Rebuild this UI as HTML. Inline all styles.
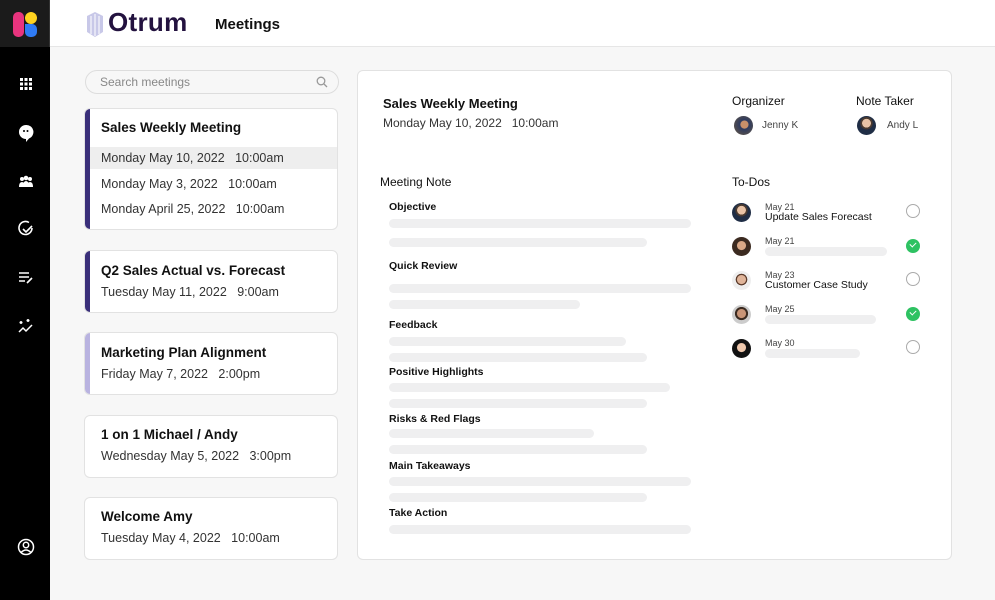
<!DOCTYPE html>
<html><head><meta charset="utf-8"><style>
*{margin:0;padding:0;box-sizing:border-box}
body{width:995px;height:600px;overflow:hidden;background:#f7f7f7;font-family:"Liberation Sans",sans-serif;position:relative;color:#111}
.a{position:absolute}
.side{left:0;top:0;width:50px;height:600px;background:#000}
.logo{left:0;top:0;width:50px;height:47px;background:#1b1b1b;border-right:1px solid #333}
.hdr{left:50px;top:0;width:945px;height:47px;background:#fff;border-bottom:1px solid #e6e6e6}
.card{background:#fff;border:1px solid #e2e2e2;border-radius:6px;overflow:hidden;left:84px;width:254px}
.card .bar{position:absolute;left:0;top:0;bottom:0;width:5px}
.t{font-weight:bold;font-size:13.5px;position:absolute;left:16px}
.d{font-size:12.5px;color:#333;position:absolute;left:16px;white-space:pre}
.sk{position:absolute;height:9px;border-radius:5px;background:#efeff0}
.lb{position:absolute;left:389px;font-size:10.5px;font-weight:bold}
.av{position:absolute;width:19px;height:19px;border-radius:50%;background:radial-gradient(circle at 50% 38%,#e9c3a6 0 28%,#4a3a30 30% 40%,#1f2d45 42%)}
.ck{position:absolute;left:906px;width:14px;height:14px;border-radius:50%;border:1.3px solid #aaa}
.ok{border:none;background:#2ec262}
.ok:after{content:"";position:absolute;left:4px;top:3px;width:5px;height:3px;border-left:1.5px solid #fff;border-bottom:1.5px solid #fff;transform:rotate(-45deg)}
.sm{position:absolute;left:765px;font-size:9px;color:#444}
.tt{position:absolute;left:765px;font-size:10.5px;color:#111}
</style></head><body>
<div class="a side"></div>
<div class="a logo">
 <div class="a" style="left:13px;top:12px;width:11px;height:25px;border-radius:5px;background:#e8347e"></div>
 <div class="a" style="left:25px;top:12px;width:12px;height:12px;border-radius:50%;background:#ffd21f"></div>
 <div class="a" style="left:25px;top:24px;width:12px;height:13px;border-radius:0 5px 5px 5px;background:#2f7bf5"></div>
</div>
<svg class="a" style="left:18px;top:76px" width="16" height="300" viewBox="0 0 16 300" fill="#fff" stroke="#fff">
 <g stroke="none"><rect x="2" y="2" width="3" height="3"/><rect x="6.5" y="2" width="3" height="3"/><rect x="11" y="2" width="3" height="3"/><rect x="2" y="6.5" width="3" height="3"/><rect x="6.5" y="6.5" width="3" height="3"/><rect x="11" y="6.5" width="3" height="3"/><rect x="2" y="11" width="3" height="3"/><rect x="6.5" y="11" width="3" height="3"/><rect x="11" y="11" width="3" height="3"/></g>
 <path stroke="none" d="M8 49a7 7 0 1 0 0 14v3l3-3.5A7 7 0 0 0 8 49z"/><circle cx="6" cy="55" r="1" fill="#000" stroke="none"/><circle cx="9.5" cy="55" r="1" fill="#000" stroke="none"/>
 <g stroke="none"><circle cx="4" cy="103" r="2"/><circle cx="8" cy="102" r="2.3"/><circle cx="12" cy="103" r="2"/><path d="M1 111q0-5 3-5t3 5zM5 111q0-6 3-6t3 6zM9 111q0-5 3-5t3 5z"/></g>
 <path fill="none" stroke-width="1.6" d="M14 152a6.5 6.5 0 1 1-3-5.5M5 153l3 3 6-6"/>
 <path fill="none" stroke-width="1.6" d="M1 197h10M1 201h10M1 205h6M9 207l5-5"/>
 <path fill="none" stroke-width="1.5" d="M1 256l4-4 3 3 6-6M3 245v3M1.5 246.5h3M10 243v3M8.5 244.5h3"/>
</svg>
<svg class="a" style="left:17px;top:538px" width="18" height="18" viewBox="0 0 18 18" fill="none" stroke="#fff" stroke-width="1.5"><circle cx="9" cy="9" r="7.5"/><circle cx="9" cy="7" r="2.7"/><path d="M4 14.5q5-5 10 0"/></svg>
<div class="a hdr"></div>
<svg class="a" style="left:85px;top:12px" width="20" height="25" viewBox="0 0 20 25"><path d="M10 0L2 4v16l8 5 8-5V4z" fill="#c8c8e8"/><path d="M6 4v18M10 2v22M14 4v18" stroke="#fff" stroke-width="1"/></svg>
<div class="a" style="left:108px;top:7px;font-size:26px;font-weight:bold;color:#23123f;letter-spacing:0.3px">Otrum</div>
<div class="a" style="left:215px;top:16px;font-size:15px;font-weight:bold">Meetings</div>
<div class="a" style="left:85px;top:70px;width:254px;height:24px;border:1px solid #ddd;border-radius:12px;background:#f7f7f7"></div>
<div class="a" style="left:100px;top:75px;font-size:12px;color:#888">Search meetings</div>
<svg class="a" style="left:316px;top:76px" width="12" height="12" viewBox="0 0 12 12" fill="none" stroke="#999" stroke-width="1.3"><circle cx="5" cy="5" r="3.8"/><path d="M8 8l3 3"/></svg>

<div class="a card" style="top:108px;height:122px"><div class="bar" style="background:#3a2f7a"></div>
 <div class="t" style="top:11px">Sales Weekly Meeting</div>
 <div class="a" style="left:5px;top:38px;width:250px;height:22px;background:#eeeeee"></div>
 <div class="d" style="top:42px">Monday May 10, 2022   10:00am</div>
 <div class="d" style="top:68px">Monday May 3, 2022   10:00am</div>
 <div class="d" style="top:93px">Monday April 25, 2022   10:00am</div></div>
<div class="a card" style="top:250px;height:63px"><div class="bar" style="background:#3a2f7a"></div>
 <div class="t" style="top:12px">Q2 Sales Actual vs. Forecast</div><div class="d" style="top:34px">Tuesday May 11, 2022   9:00am</div></div>
<div class="a card" style="top:332px;height:63px"><div class="bar" style="background:#b9b3e0"></div>
 <div class="t" style="top:12px">Marketing Plan Alignment</div><div class="d" style="top:34px">Friday May 7, 2022   2:00pm</div></div>
<div class="a card" style="top:415px;height:63px">
 <div class="t" style="top:11px">1 on 1  Michael / Andy</div><div class="d" style="top:33px">Wednesday May 5, 2022   3:00pm</div></div>
<div class="a card" style="top:497px;height:63px">
 <div class="t" style="top:11px">Welcome Amy</div><div class="d" style="top:33px">Tuesday May 4, 2022   10:00am</div></div>

<div class="a" style="left:357px;top:70px;width:595px;height:490px;background:#fff;border:1px solid #e2e2e2;border-radius:6px"></div>
<div class="a" style="left:383px;top:96px;font-size:13px;font-weight:bold">Sales Weekly Meeting</div>
<div class="a" style="left:383px;top:116px;font-size:12px;color:#333;white-space:pre">Monday May 10, 2022   10:00am</div>
<div class="a" style="left:732px;top:94px;font-size:12px">Organizer</div>
<div class="a" style="left:856px;top:94px;font-size:12px">Note Taker</div>
<div class="av" style="left:734px;top:116px;background:radial-gradient(circle at 55% 45%,#c9906a 0 25%,#2d3a60 30%,#6b5a40)"></div>
<div class="a" style="left:762px;top:120px;font-size:10px;color:#444">Jenny K</div>
<div class="av" style="left:857px;top:116px"></div>
<div class="a" style="left:887px;top:120px;font-size:10px;color:#444">Andy L</div>

<div class="a" style="left:380px;top:175px;font-size:12px">Meeting Note</div>
<div class="lb" style="top:201px">Objective</div>
<div class="sk" style="left:389px;top:219px;width:302px"></div><div class="sk" style="left:389px;top:238px;width:258px"></div>
<div class="lb" style="top:260px">Quick Review</div>
<div class="sk" style="left:389px;top:284px;width:302px"></div><div class="sk" style="left:389px;top:300px;width:191px"></div>
<div class="lb" style="top:319px">Feedback</div>
<div class="sk" style="left:389px;top:337px;width:237px"></div><div class="sk" style="left:389px;top:353px;width:258px"></div>
<div class="lb" style="top:366px">Positive Highlights</div>
<div class="sk" style="left:389px;top:383px;width:281px"></div><div class="sk" style="left:389px;top:399px;width:258px"></div>
<div class="lb" style="top:413px">Risks &amp; Red Flags</div>
<div class="sk" style="left:389px;top:429px;width:205px"></div><div class="sk" style="left:389px;top:445px;width:258px"></div>
<div class="lb" style="top:460px">Main Takeaways</div>
<div class="sk" style="left:389px;top:477px;width:302px"></div><div class="sk" style="left:389px;top:493px;width:258px"></div>
<div class="lb" style="top:507px">Take Action</div>
<div class="sk" style="left:389px;top:525px;width:302px"></div>

<div class="a" style="left:732px;top:175px;font-size:12px">To-Dos</div>
<div class="av" style="left:732px;top:203px"></div><div class="sm" style="top:202px">May 21</div><div class="tt" style="top:211px">Update Sales Forecast</div><div class="ck" style="top:204px"></div>
<div class="av" style="left:732px;top:237px;background:radial-gradient(circle at 50% 45%,#d9a887 0 30%,#3b2a20 34%)"></div><div class="sm" style="top:236px">May 21</div><div class="sk" style="left:765px;top:247px;width:122px"></div><div class="ck ok" style="top:239px"></div>
<div class="av" style="left:732px;top:271px;background:radial-gradient(circle at 50% 45%,#e0b59a 0 30%,#5a3a2a 34% 40%,#eee 42%)"></div><div class="sm" style="top:270px">May 23</div><div class="tt" style="top:279px">Customer Case Study</div><div class="ck" style="top:272px"></div>
<div class="av" style="left:732px;top:305px;background:radial-gradient(circle at 50% 45%,#c99577 0 30%,#3a2a20 34% 45%,#ccc 48%)"></div><div class="sm" style="top:304px">May 25</div><div class="sk" style="left:765px;top:315px;width:111px"></div><div class="ck ok" style="top:307px"></div>
<div class="av" style="left:732px;top:339px;background:radial-gradient(circle at 50% 45%,#efc8ad 0 30%,#111 34%)"></div><div class="sm" style="top:338px">May 30</div><div class="sk" style="left:765px;top:349px;width:95px"></div><div class="ck" style="top:340px"></div>
</body></html>
